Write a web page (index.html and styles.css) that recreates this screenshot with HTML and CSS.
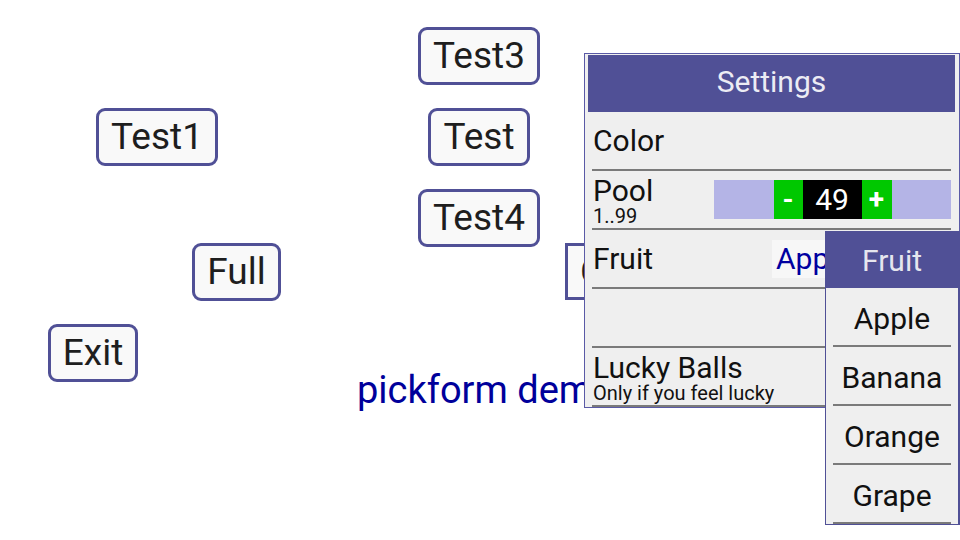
FILE: index.html
```html
<!DOCTYPE html>
<html>
<head>
<meta charset="utf-8">
<link rel="stylesheet" href="styles.css">
</head>
<body>
<div class="canvas">
  <button class="btn btn-test3">Test3</button>
  <button class="btn btn-test1">Test1</button>
  <button class="btn btn-test">Test</button>
  <button class="btn btn-test4">Test4</button>
  <button class="btn btn-full">Full</button>
  <button class="btn btn-exit">Exit</button>
  <button class="btn btn-hidden">C</button>
  <div class="title">pickform demo</div>

  <div class="panel">
    <div class="panel-head">Settings</div>
    <div class="row">
      <div class="label">Color</div>
    </div>
    <div class="row">
      <div class="label-block">
        <div class="label">Pool</div>
        <div class="sub">1..99</div>
      </div>
      <div class="stepper">
        <span class="step">-</span>
        <span class="num">49</span>
        <span class="step step-plus">+</span>
      </div>
    </div>
    <div class="row">
      <div class="label">Fruit</div>
      <div class="value">Apple</div>
    </div>
    <div class="row"></div>
    <div class="row">
      <div class="label-block">
        <div class="label">Lucky Balls</div>
        <div class="sub">Only if you feel lucky</div>
      </div>
    </div>
  </div>

  <div class="dropdown">
    <div class="dd-head">Fruit</div>
    <div class="dd-list">
      <div class="dd-item">Apple</div>
      <div class="dd-item">Banana</div>
      <div class="dd-item">Orange</div>
      <div class="dd-item">Grape</div>
    </div>
  </div>
</div>
</body>
</html>
```
FILE: styles.css
```css
* { box-sizing: border-box; }
html, body {
  margin: 0;
  padding: 0;
  background: #ffffff;
}
body {
  font-family: Roboto, "Liberation Sans", sans-serif;
}
.canvas {
  position: relative;
  width: 960px;
  height: 540px;
  overflow: hidden;
  background: #ffffff;
}

/* free-placed buttons on the canvas */
.btn {
  position: absolute;
  height: 58px;
  margin: 0;
  padding: 0;
  border: 3px solid #505096;
  border-radius: 9px;
  background: #f9f9f9;
  color: #1e1e1e;
  font-family: Roboto, sans-serif;
  font-size: 37px;
  line-height: 52px;
  text-align: center;
}
.btn-test3 { left: 418px; top: 27px; width: 122px; }
.btn-test1 { left: 96px; top: 108px; width: 122px; }
.btn-test  { left: 428px; top: 108px; width: 102px; }
.btn-test4 { left: 418px; top: 189px; width: 122px; }
.btn-full  { left: 192px; top: 243px; width: 89px; }
.btn-exit  { left: 48px; top: 324px; width: 90px; }
.btn-hidden {
  left: 565px; top: 243px; width: 60px; height: 57px;
  border-radius: 0;
  text-align: left;
  padding-left: 12px;
  overflow: hidden;
}

.title {
  position: absolute;
  left: 357px;
  top: 366px;
  font-size: 38px;
  line-height: 48px;
  color: #00009b;
  white-space: nowrap;
}

/* settings panel overlay */
.panel {
  position: absolute;
  left: 584px;
  top: 53px;
  width: 376px;
  height: 355px;
  border: 1px solid #5a5aa6;
  background: #efefef;
  padding: 1px 4px 0 3px;
  display: flex;
  flex-direction: column;
  z-index: 2;
}
.panel-head {
  height: 57px;
  background: #505096;
  color: #ececf4;
  font-size: 30px;
  padding-bottom: 5px;
  display: flex;
  align-items: center;
  justify-content: center;
  flex: none;
}
.row {
  height: 59px;
  flex: none;
  margin: 0 4px;
  border-bottom: 2px solid #7a7a7a;
  display: flex;
  align-items: center;
  color: #111111;
}
.label {
  font-size: 30px;
  line-height: 32px;
  padding-left: 1px;
}
.label-block {
  align-self: flex-end;
  display: flex;
  flex-direction: column;
  padding-bottom: 1px;
}
.label-block .label { line-height: 30px; }
.sub {
  font-size: 20px;
  line-height: 21px;
  padding-left: 1px;
}
.stepper {
  margin-left: auto;
  width: 237px;
  height: 39px;
  background: #b4b4e6;
  display: flex;
  justify-content: center;
  align-items: stretch;
}
.step {
  width: 29px;
  background: #00c800;
  color: #ffffff;
  font-size: 28px;
  font-weight: bold;
  display: flex;
  align-items: center;
  justify-content: center;
}
.step-plus { width: 30px; }
.num {
  width: 59px;
  background: #000000;
  color: #ffffff;
  font-size: 30px;
  display: flex;
  align-items: center;
  justify-content: center;
}
.value {
  margin-left: auto;
  width: 179px;
  height: 38px;
  background: #f7f7f7;
  color: #0000a0;
  font-size: 30px;
  line-height: 38px;
  padding-left: 4px;
}

/* dropdown overlay */
.dropdown {
  position: absolute;
  left: 825px;
  top: 231px;
  width: 135px;
  border: 1px solid #505096;
  border-right-width: 2px;
  background: #efefef;
  z-index: 3;
}
.dd-head {
  height: 56px;
  background: #505096;
  color: #e6e6ee;
  font-size: 30px;
  display: flex;
  align-items: center;
  justify-content: center;
}
.dd-list {
  padding: 0 7px 0 7px;
}
.dd-item {
  height: 59px;
  border-bottom: 2px solid #7a7a7a;
  color: #111111;
  font-size: 30px;
  padding-top: 3px;
  display: flex;
  align-items: center;
  justify-content: center;
}
```
